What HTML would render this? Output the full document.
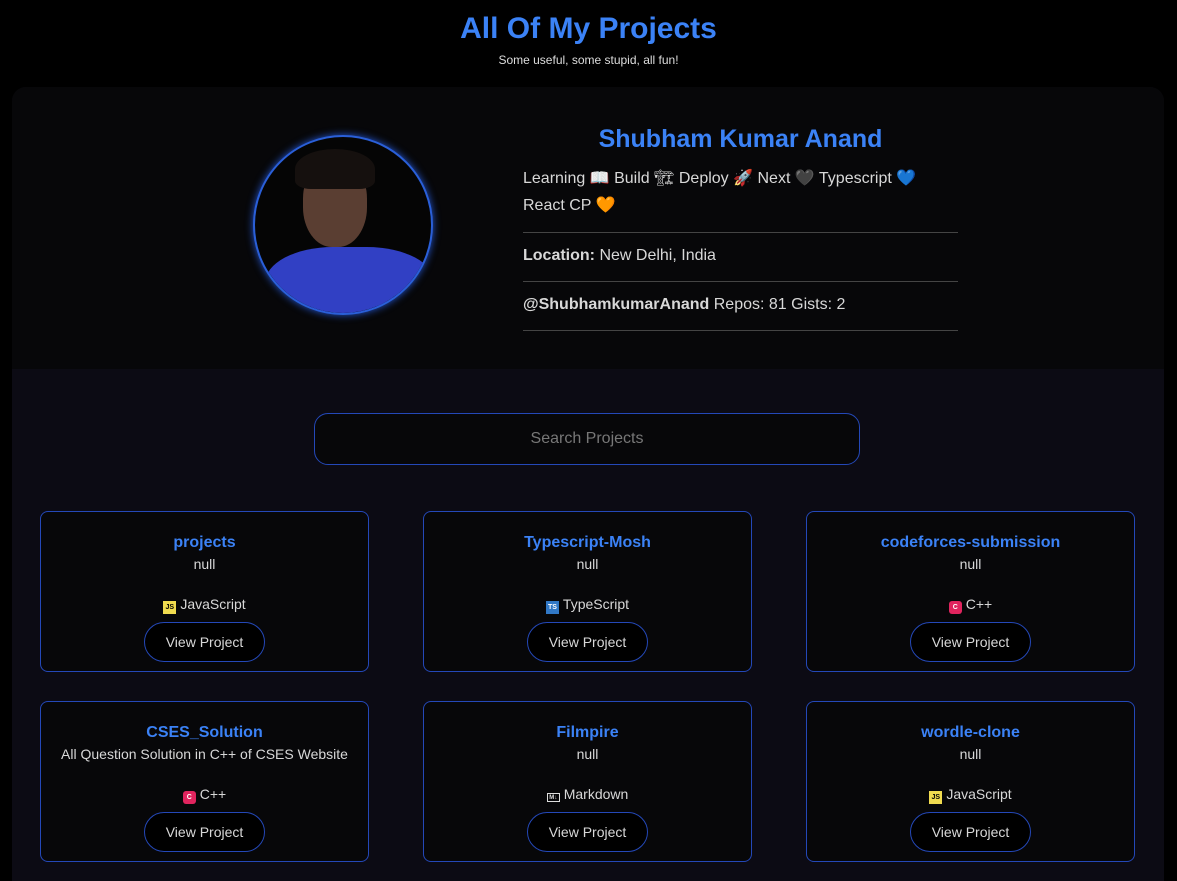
<!DOCTYPE html>
<html><head><meta charset="utf-8"><style>
*{box-sizing:border-box;margin:0;padding:0}
html,body{width:1177px;height:881px;overflow:hidden}
body{background:#000;font-family:"Liberation Sans",sans-serif;color:#d8d8d8}
h1{position:absolute;top:12px;width:100%;text-align:center;color:#3b82f6;font-size:30px;font-weight:bold}
.sub{position:absolute;top:53px;width:100%;text-align:center;font-size:12px;color:#ddd}
.wrap{position:absolute;left:12px;top:87px;width:1152px;height:794px;border-radius:14px 14px 0 0;background:#0c0b14;overflow:hidden}
.prof{position:absolute;left:0;top:0;width:1152px;height:282px;background:#070709}
.photo{position:absolute;left:241px;top:48px;width:180px;height:180px;border-radius:50%;border:2px solid #2a5fd8;box-shadow:0 0 8px #2456d0;background:#050505;overflow:hidden}
.photo .h{position:absolute;left:48px;top:22px;width:64px;height:88px;border-radius:45%;background:#5a3e32}
.photo .hair{position:absolute;left:40px;top:12px;width:80px;height:40px;border-radius:50% 50% 20% 20%;background:#15100e}
.photo .s{position:absolute;left:10px;top:110px;width:170px;height:90px;border-radius:40% 40% 0 0;background:#3140c4}
.name{position:absolute;left:511px;width:435px;top:38px;text-align:center;color:#3b82f6;font-size:25px;font-weight:bold}
.info{position:absolute;left:511px;top:78px;width:435px;font-size:16px;line-height:27px}
.info hr{border:0;border-top:1px solid #444;margin:0}
.search{position:absolute;left:302px;top:326px;width:546px;height:52px;border:1px solid #2448b8;border-radius:14px;background:#070709;text-align:center;line-height:50px;color:#777;font-size:16px}
.card{position:absolute;width:329px;height:161px;border:1px solid #2448b8;border-radius:8px;background:#070709;text-align:center}
.card .t{margin-top:22px;color:#3b82f6;font-weight:bold;font-size:16px}
.card .d{margin-top:4px;font-size:14px}
.card .l{margin-top:24px;font-size:14px;height:18px}
.card .b{display:inline-block;margin-top:8px;width:121px;height:40px;border:1px solid #2448b8;border-radius:20px;background:#000;line-height:38px;font-size:14px}
.ic{display:inline-block;width:13px;height:13px;vertical-align:0px;margin-right:4px;font-size:7px;line-height:13px;font-weight:bold}
</style></head><body>
<h1>All Of My Projects</h1>
<div class="sub">Some useful, some stupid, all fun!</div>
<div class="wrap">
<div class="prof">
<div class="photo"><div class="s"></div><div class="h"></div><div class="hair"></div></div>
<div class="name">Shubham Kumar Anand</div>
<div class="info">
<div style="padding-bottom:13px">Learning 📖 Build 🏗 Deploy 🚀 Next 🖤 Typescript 💙<br>React CP 🧡</div>
<hr><div style="padding:9px 0 12px"><b>Location:</b> New Delhi, India</div>
<hr><div style="padding:9px 0 12px"><b>@ShubhamkumarAnand</b> Repos: 81 Gists: 2</div><hr>
</div>
</div>
<div class="search">Search Projects</div>
<div class="card" style="left:28px;top:424px"><div class="t">projects</div><div class="d">null</div><div class="l"><span class="ic" style="background:#f0db4f;color:#000">JS</span>JavaScript</div><div class="b">View Project</div></div>
<div class="card" style="left:411px;top:424px"><div class="t">Typescript-Mosh</div><div class="d">null</div><div class="l"><span class="ic" style="background:#3178c6;color:#fff">TS</span>TypeScript</div><div class="b">View Project</div></div>
<div class="card" style="left:794px;top:424px"><div class="t">codeforces-submission</div><div class="d">null</div><div class="l"><span class="ic" style="background:#e0245e;color:#fff;border-radius:3px">C</span>C++</div><div class="b">View Project</div></div>
<div class="card" style="left:28px;top:614px"><div class="t">CSES_Solution</div><div class="d">All Question Solution in C++ of CSES Website</div><div class="l"><span class="ic" style="background:#e0245e;color:#fff;border-radius:3px">C</span>C++</div><div class="b">View Project</div></div>
<div class="card" style="left:411px;top:614px"><div class="t">Filmpire</div><div class="d">null</div><div class="l"><span class="ic" style="border:1px solid #ddd;color:#ddd;height:9px;line-height:8px;font-size:6px">M↓</span>Markdown</div><div class="b">View Project</div></div>
<div class="card" style="left:794px;top:614px"><div class="t">wordle-clone</div><div class="d">null</div><div class="l"><span class="ic" style="background:#f0db4f;color:#000">JS</span>JavaScript</div><div class="b">View Project</div></div>
</div>
</body></html>
